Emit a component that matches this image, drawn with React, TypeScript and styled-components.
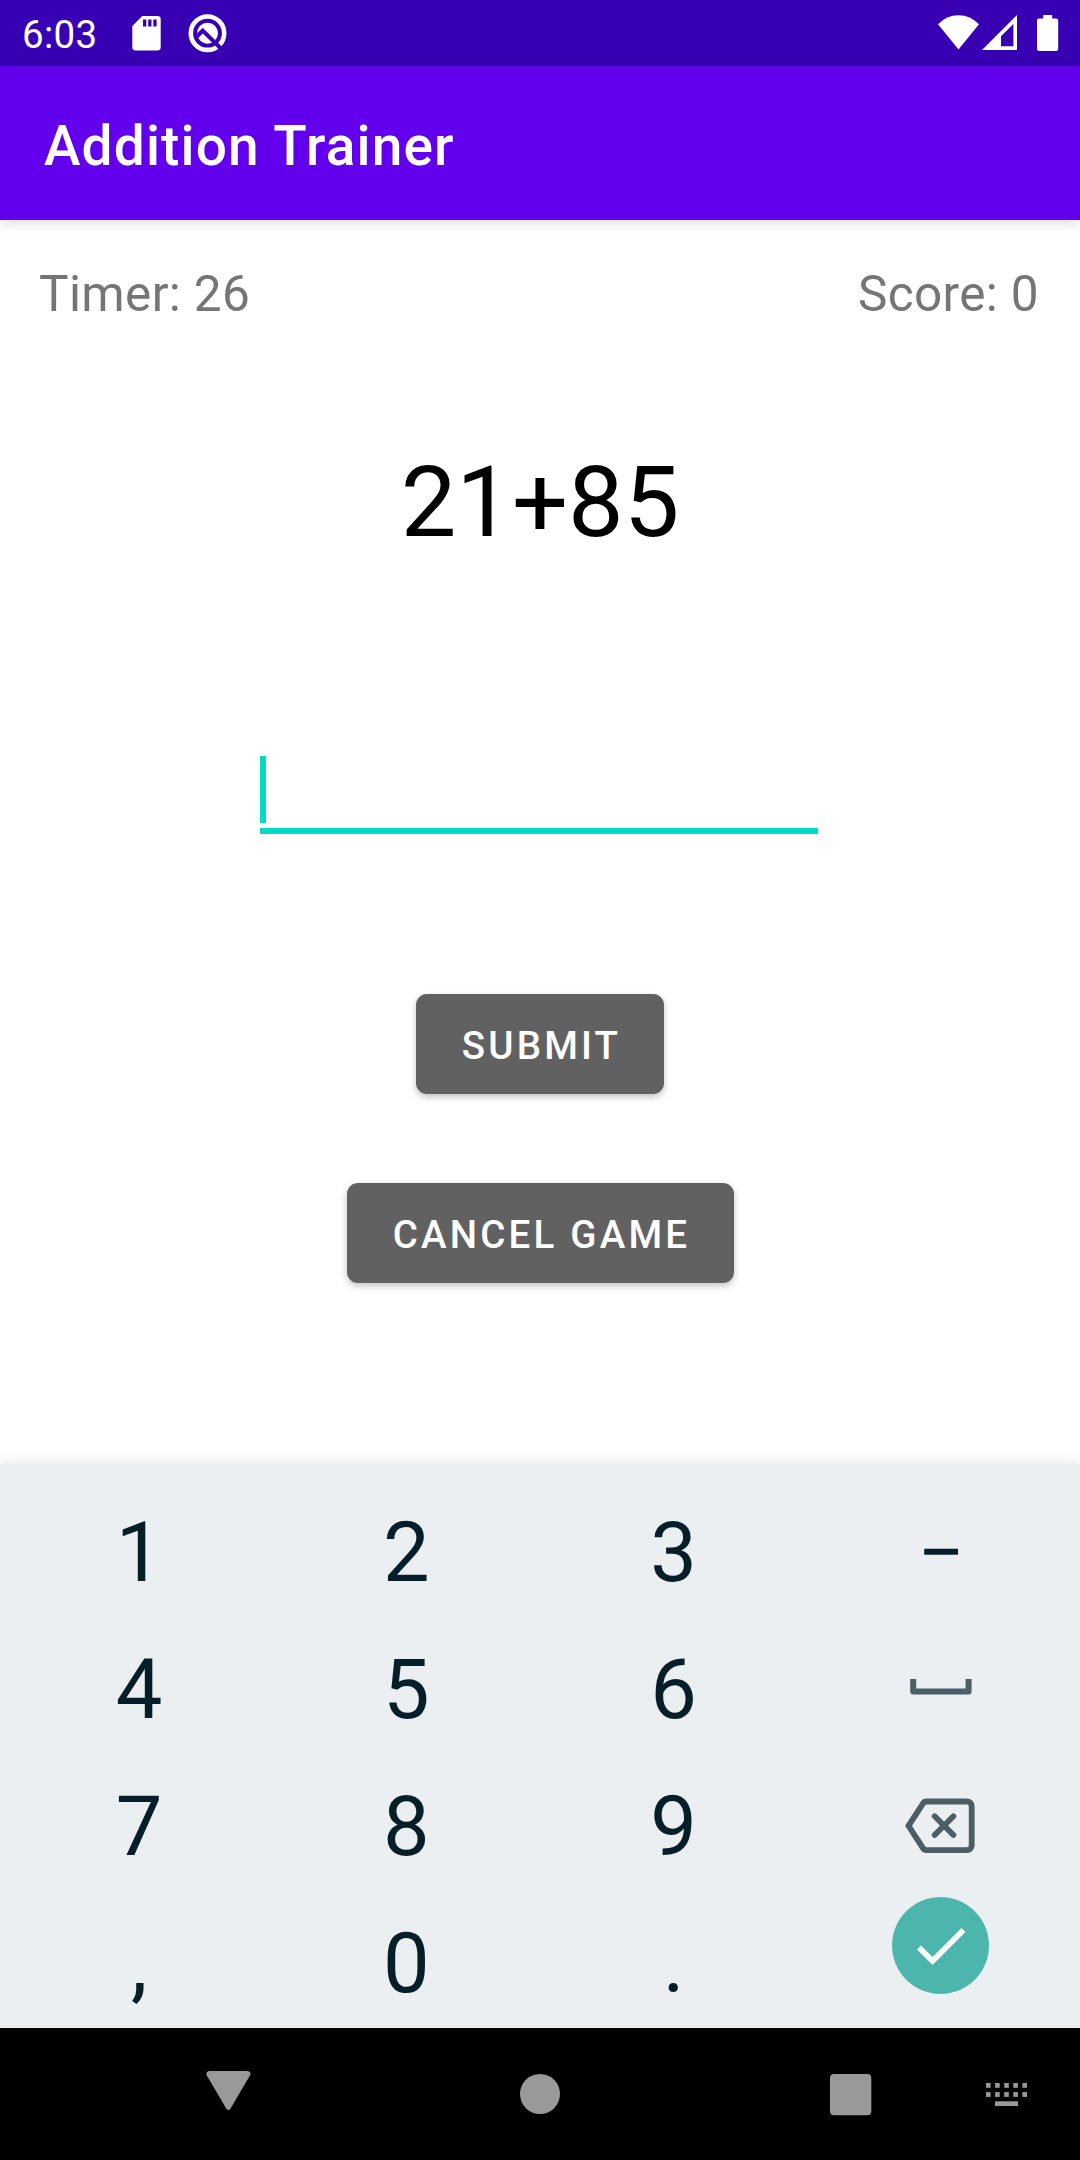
import React from "react";
import styled, { createGlobalStyle } from "styled-components";

const GlobalStyle = createGlobalStyle`
  * { box-sizing: border-box; }
  body { margin: 0; background: #fff; }
  svg { display: block; flex: none; }
  button { border: 0; padding: 0; background: none; font: inherit; color: inherit; }
`;

const Screen = styled.div`
  width: 1080px;
  height: 2160px;
  display: flex;
  flex-direction: column;
  overflow: hidden;
  background: #fff;
  font-family: Roboto, "Noto Sans", sans-serif;
`;

const StatusBar = styled.div`
  height: 66px;
  flex: none;
  display: flex;
  align-items: flex-start;
  background: #3700b3;
  color: #fff;
`;

const Clock = styled.span`
  width: 132px;
  padding: 12px 0 0 22px;
  font-size: 38.5px;
  line-height: 46px;
  letter-spacing: 0.3px;
  white-space: nowrap;
`;

const Notifications = styled.div`
  flex: 1;
  display: flex;
`;

const AppBar = styled.header`
  height: 154px;
  flex: none;
  display: flex;
  align-items: center;
  padding: 6px 44px 0;
  background: #6200ee;
  box-shadow: 0 3px 13px rgba(0, 0, 0, 0.15);
  color: #fff;
`;

const Title = styled.h1`
  margin: 0;
  font-size: 55px;
  line-height: 64px;
  font-weight: 500;
  letter-spacing: 1.15px;
`;

const Game = styled.main`
  height: 1244px;
  flex: none;
  display: flex;
  flex-direction: column;
  align-items: center;
`;

const Stats = styled.div`
  align-self: stretch;
  display: flex;
  justify-content: space-between;
  padding: 45px 41px 0 39px;
  font-size: 49.5px;
  line-height: 58px;
  letter-spacing: 0.35px;
  color: #757575;
`;

const Equation = styled.div`
  margin-top: 121px;
  font-size: 99px;
  line-height: 116px;
  color: #000;
`;

const AnswerField = styled.div`
  width: 558px;
  height: 78px;
  margin: 196px 2px 0 0;
  border-bottom: 6px solid #03dac5;
`;

const Caret = styled.div`
  width: 6px;
  height: 67px;
  background: #03dac5;
`;

const ActionButton = styled.button<{ $gap: number; $width: number }>`
  width: ${(p) => p.$width}px;
  height: 100px;
  margin-top: ${(p) => p.$gap}px;
  padding: 3px 0 0 3px;
  border-radius: 11px;
  background: #616161;
  box-shadow: 0 3px 7px rgba(0, 0, 0, 0.24);
  color: #fff;
  font-size: 38.5px;
  font-weight: 500;
  letter-spacing: 3.2px;
  text-transform: uppercase;
  white-space: nowrap;
`;

const Keypad = styled.div`
  height: 564px;
  flex: none;
  display: grid;
  grid-template-columns: repeat(4, 1fr);
  grid-auto-rows: 137px;
  padding: 20px 5.5px 0;
  background: #ebeff2;
  box-shadow: 0 0 14px rgba(0, 0, 0, 0.12);
`;

const Key = styled.button`
  display: flex;
  align-items: center;
  justify-content: center;
  height: 137px;
  font-size: 83px;
  line-height: 98px;
  color: #051e28;
`;

const SpaceKey = styled(Key)`
  padding-bottom: 6px;
`;

const BackspaceKey = styled(Key)`
  padding: 0 2px 2px 0;
`;

const EnterKey = styled(Key)`
  padding-bottom: 36px;
`;

const EnterDisc = styled.span`
  width: 97px;
  height: 97px;
  display: flex;
  align-items: center;
  justify-content: center;
  border-radius: 50%;
  background: #4db6ac;
`;

const NavBar = styled.nav`
  height: 132px;
  flex: none;
  display: grid;
  grid-template-columns: 384px 312px 264px 120px;
  background: #000;
`;

const NavButton = styled.button<{ $left: number; $top: number }>`
  display: flex;
  padding: ${(p) => p.$top}px 0 0 ${(p) => p.$left}px;
`;

const SdCardIcon = () => (
  <svg width="38" height="66" viewBox="132 0 38 66" fill="#fff">
    <path
      fillRule="evenodd"
      d="M142.300 16h15.100a3.300 3.300 0 0 1 3.300 3.300v27.900a3.300 3.300 0 0 1-3.300 3.300h-21.800a3.300 3.300 0 0 1-3.300-3.300V26zM143 19.500v7h3.300v-7zM148.200 19.500v7h3.300v-7zM153.300 19.500v7h3.300v-7z"
    />
  </svg>
);

const DebugIcon = () => (
  <svg width="60" height="66" viewBox="170 0 60 66" fill="none">
    <circle cx="207.500" cy="33.200" r="16.700" stroke="#fff" strokeWidth="4.600" />
    <circle cx="207.500" cy="33.200" r="10.500" fill="#fff" />
    <path d="M196 37.500l6.700-7L223 50.500" stroke="#3700b3" strokeWidth="4" />
  </svg>
);

const SystemIcons = () => (
  <svg width="150" height="66" viewBox="930 0 150 66" fill="#fff">
    <path d="M958.500 49.500L938 24.300Q946.500 15.200 958.500 15.200T979 24.300z" />
    <path fillRule="evenodd" d="M982 50L1017 15v35zM1001 46.300h12.400V24L1001 36.300z" />
    <path d="M1043.200 15h9v3.500h4a2 2 0 0 1 2 2v28.500a2 2 0 0 1-2 2h-17.200a2 2 0 0 1-2-2V20.500a2 2 0 0 1 2-2h4.200z" />
  </svg>
);

const SpaceIcon = () => (
  <svg width="62" height="17" viewBox="0 0 62 17" fill="none">
    <path d="M3.200 1v12.500h55.400V1" stroke="#4b5d65" strokeWidth="6" strokeLinejoin="round" />
  </svg>
);

const BackspaceIcon = () => (
  <svg width="70" height="56" viewBox="0 0 70 56" fill="none" stroke="#4b5d65">
    <path
      d="M21.500 3.500h40.500a4.700 4.700 0 0 1 4.700 4.700v39.200a4.700 4.700 0 0 1-4.700 4.700H21.500q-2.200 0-3.500-2L3.500 27.800 18 5.500q1.300-2 3.500-2z"
      strokeWidth="5.800"
    />
    <path d="M29.700 18.300l18.700 18.700M48.400 18.300L29.700 37" strokeWidth="5.800" strokeLinecap="round" />
  </svg>
);

const CheckIcon = () => (
  <svg width="50" height="38" viewBox="0 0 50 38" fill="none">
    <path d="M3 20.500L16.500 34 47.500 3" stroke="#fff" strokeWidth="5.500" />
  </svg>
);

const BackIcon = () => (
  <svg width="45" height="40" viewBox="0 0 45 40" fill="#999">
    <path d="M3 0h38.800q4 .8 2.100 4.600L24.600 37.500q-2.200 3-4.400 0L.8 4.600Q-.7 1 3 0z" />
  </svg>
);

const HomeIcon = () => (
  <svg width="40" height="40" viewBox="0 0 40 40">
    <circle cx="20" cy="20" r="20" fill="#999" />
  </svg>
);

const RecentsIcon = () => (
  <svg width="42" height="42" viewBox="0 0 42 42">
    <rect width="41.300" height="41.300" rx="4" fill="#999" />
  </svg>
);

const KeyboardIcon = () => (
  <svg width="42" height="24" viewBox="0 0 42 24" fill="#999">
    {[0, 9.1].map((y) =>
      [0, 9.1, 18.2, 27.3, 36.4].map((x) => (
        <rect key={`${x}-${y}`} x={x} y={y} width="4.600" height="4.800" />
      )),
    )}
    <rect x="9" y="18.300" width="23" height="4.700" />
  </svg>
);

export default function App() {
  return (
    <>
      <GlobalStyle />
      <Screen>
        <StatusBar>
          <Clock>6:03</Clock>
          <Notifications>
            <SdCardIcon />
            <DebugIcon />
          </Notifications>
          <SystemIcons />
        </StatusBar>
        <AppBar>
          <Title>Addition Trainer</Title>
        </AppBar>
        <Game>
          <Stats>
            <span>Timer: 26</span>
            <span>Score: 0</span>
          </Stats>
          <Equation>21+85</Equation>
          <AnswerField>
            <Caret />
          </AnswerField>
          <ActionButton $gap={160} $width={248}>Submit</ActionButton>
          <ActionButton $gap={89} $width={387}>Cancel game</ActionButton>
        </Game>
        <Keypad>
          <Key>1</Key>
          <Key>2</Key>
          <Key>3</Key>
          <Key>−</Key>
          <Key>4</Key>
          <Key>5</Key>
          <Key>6</Key>
          <SpaceKey><SpaceIcon /></SpaceKey>
          <Key>7</Key>
          <Key>8</Key>
          <Key>9</Key>
          <BackspaceKey><BackspaceIcon /></BackspaceKey>
          <Key>,</Key>
          <Key>0</Key>
          <Key>.</Key>
          <EnterKey>
            <EnterDisc>
              <CheckIcon />
            </EnterDisc>
          </EnterKey>
        </Keypad>
        <NavBar>
          <NavButton $left={206} $top={43}><BackIcon /></NavButton>
          <NavButton $left={136} $top={46}><HomeIcon /></NavButton>
          <NavButton $left={134} $top={46}><RecentsIcon /></NavButton>
          <NavButton $left={26} $top={55}><KeyboardIcon /></NavButton>
        </NavBar>
      </Screen>
    </>
  );
}
